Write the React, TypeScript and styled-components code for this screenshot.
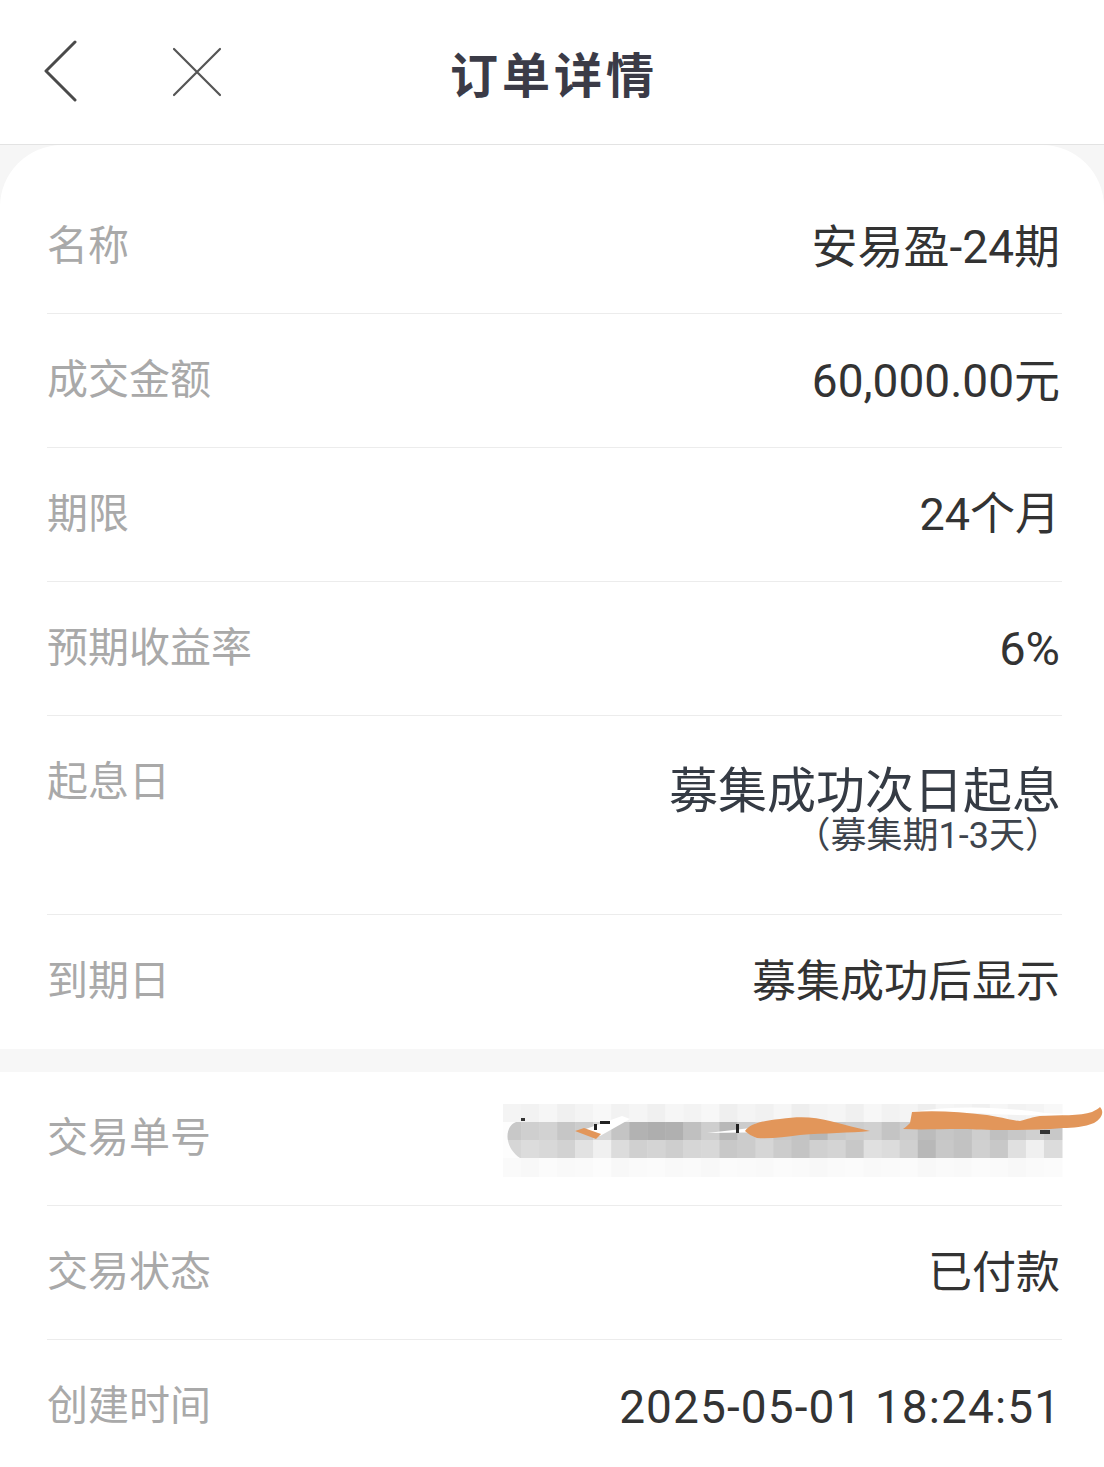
import React from "react";
import styled, { createGlobalStyle } from "styled-components";

const GlobalStyle = createGlobalStyle`
  html, body {
    margin: 0;
    padding: 0;
    background: #f6f6f6;
  }
  body {
    font-family: Roboto, "Noto Sans CJK SC", "Noto Sans", sans-serif;
    -webkit-font-smoothing: antialiased;
  }
  * { box-sizing: border-box; }
`;

const Page = styled.div`
  width: 1104px;
  min-height: 1467px;
  background: #f6f6f6;
  overflow: hidden;
`;

const Header = styled.header`
  height: 145px;
  background: #fff;
  border-bottom: 1px solid #e3e3e3;
  display: grid;
  grid-template-columns: 1fr auto 1fr;
  align-items: center;
`;

const NavIcons = styled.div`
  display: flex;
  align-items: center;
  padding-left: 42px;
  gap: 94px;
`;

const IconButton = styled.button`
  display: flex;
  align-items: center;
  justify-content: center;
  padding: 0;
  margin: 0;
  border: none;
  background: transparent;
  cursor: pointer;
`;

const Title = styled.h1`
  margin: 0;
  font-family: "Noto Sans CJK SC", sans-serif;
  font-size: 48px;
  font-weight: 700;
  letter-spacing: 4px;
  padding-left: 4px;
  color: #3b3b47;
  line-height: 1;
`;

const Card = styled.section`
  background: #fff;
  border-radius: 62px 62px 0 0;
  padding-top: 35px;
`;

const Section = styled.section`
  background: #fff;
`;

const Gap = styled.div`
  height: 23px;
  background: #f7f7f7;
`;

const Row = styled.div<{ $tall?: boolean; $last?: boolean }>`
  position: relative;
  display: flex;
  justify-content: space-between;
  align-items: ${(p) => (p.$tall ? "flex-start" : "center")};
  height: ${(p) => (p.$tall ? 199 : 134)}px;
  margin: 0 42px 0 47px;
  border-bottom: 1px solid ${(p) => (p.$last ? "transparent" : "#ececec")};
`;

const Label = styled.div`
  font-size: 41px;
  line-height: 133px;
  color: #a9a9a9;
  white-space: nowrap;
`;

const Value = styled.div<{ $size?: number; $spacing?: number }>`
  font-size: ${(p) => p.$size ?? 46}px;
  letter-spacing: ${(p) => p.$spacing ?? 0}px;
  line-height: 1;
  color: #333;
  white-space: nowrap;
  margin-right: ${(p) => 2 - (p.$spacing ?? 0)}px;
`;

const ValueStack = styled.div`
  display: flex;
  flex-direction: column;
  align-items: flex-end;
  padding-top: 50px;
  margin-right: 1px;
`;

const MainValue = styled.div`
  font-size: 49px;
  line-height: 52px;
  color: #353b44;
  white-space: nowrap;
`;

const SubValue = styled.div`
  font-size: 36px;
  line-height: 36px;
  color: #3e444c;
  white-space: nowrap;
`;

const RedactedArt = styled.svg`
  position: absolute;
  right: -42px;
  top: 0;
  width: 614px;
  height: 134px;
`;

const row1 = [0xf4,0xf2,0xf6,0xf0,0xf4,0xf8,0xf2,0xf5,0xf0,0xf6,0xf3,0xf7,0xef,0xf4,0xf1,0xf6,0xee,0xf3,0xf5,0xf0,0xf7,0xf2,0xf4,0xee,0xf5,0xf3,0xf0,0xf6,0xf2,0xf4,0xf8];
const row2 = [0xc8,0xcf,0xd2,0xc6,0xcc,0xd8,0xc4,0xb2,0xae,0xb0,0xc0,0xce,0xb8,0xcc,0xd4,0xc8,0xc2,0xb6,0xc8,0xcc,0xd0,0xc4,0xcc,0xbc,0xc6,0xc2,0xce,0xc0,0xc8,0xd0,0xc8];
const row3 = [0xd6,0xdc,0xd8,0xd2,0xe2,0xf0,0xdc,0xd0,0xd4,0xce,0xd6,0xd8,0xc8,0xcc,0xd6,0xcc,0xc4,0xd0,0xd4,0xc8,0xe0,0xdc,0xd0,0xb8,0xc8,0xc2,0xd0,0xc8,0xe0,0xf0,0xdc];
const row4 = [0xfa,0xf8,0xfb,0xf9,0xfa,0xfc,0xf8,0xfa,0xfb,0xf9,0xfa,0xf8,0xfb,0xfa,0xf9,0xfb,0xfa,0xf8,0xfa,0xfb,0xf9,0xfa,0xfb,0xf8,0xfa,0xf9,0xfb,0xfa,0xf8,0xfa,0xfb];
const mosaicRows = [
  { y: 1104, h: 18, shades: row1 },
  { y: 1122, h: 18, shades: row2 },
  { y: 1140, h: 18, shades: row3 },
  { y: 1158, h: 19, shades: row4 },
];
const gray = (v: number) => {
  const h = v.toString(16).padStart(2, "0");
  return `#${h}${h}${h}`;
};

function Redaction() {
  const colW = 559 / 31;
  return (
    <RedactedArt viewBox="490 1072 614 134" aria-hidden="true">
      {mosaicRows.map((r) =>
        r.shades.map((s, i) => (
          <rect
            key={`${r.y}-${i}`}
            x={503 + i * colW}
            y={r.y}
            width={colW + 0.5}
            height={r.h}
            fill={gray(s)}
          />
        ))
      )}
      {/* white brush edges */}
      <path d="M516 1122 C505 1126 503 1146 520 1158 L503 1158 L503 1122 Z" fill="#fdfdfd" />
      <path d="M583 1130 L622 1116 L630 1119 L600 1136 Z" fill="#fff" />
      <path d="M707 1133 L777 1125 L778 1132 Z" fill="#fff" />
      <path d="M912 1112 C960 1104 1010 1108 1045 1113 C1070 1116 1090 1110 1100 1106 L1098 1112 C1070 1116 1030 1116 990 1114 C960 1112 930 1112 912 1114 Z" fill="#fff" />
      {/* small dark fragments */}
      <rect x="521" y="1118" width="4" height="3" fill="#333" />
      <rect x="594" y="1124" width="3" height="6" fill="#222" />
      <rect x="600" y="1121" width="10" height="3" fill="#222" />
      <rect x="736" y="1124" width="3" height="9" fill="#222" />
      <rect x="1040" y="1130" width="10" height="4" fill="#333" />
      {/* orange strokes */}
      <path d="M575 1131 L584 1128 L601 1134 L596 1139 Z" fill="#e2965a" />
      <path d="M745 1131 C750 1124 760 1121 780 1119 C800 1116 815 1117 830 1121 C845 1125 858 1128 870 1131 C850 1133 825 1133 800 1135 C785 1137 770 1139 757 1138 C752 1136 748 1134 745 1131 Z" fill="#e2965a" />
      <path d="M910 1123 L912 1112 C935 1110 960 1112 987 1115 C1005 1118 1015 1121 1020 1121 C1028 1119 1032 1117 1040 1116 C1060 1115 1080 1116 1092 1112 C1096 1110 1099 1108 1100 1107 C1104 1111 1103 1118 1094 1123 C1085 1127 1072 1128 1063 1128 C1040 1130 1020 1130 1000 1130 C980 1130 970 1129 960 1129 C940 1129 920 1130 903 1129 C906 1127 908 1125 910 1123 Z" fill="#e2965a" />
    </RedactedArt>
  );
}

type Item = {
  label: string;
  value?: string;
  size?: number;
  spacing?: number;
  tall?: boolean;
  last?: boolean;
  redacted?: boolean;
};

const firstSection: Item[] = [
  { label: "名称", value: "安易盈-24期" },
  { label: "成交金额", value: "60,000.00元" },
  { label: "期限", value: "24个月", size: 45 },
  { label: "预期收益率", value: "6%", size: 47 },
  { label: "起息日", tall: true },
  { label: "到期日", value: "募集成功后显示", size: 44, last: true },
];

const secondSection: Item[] = [
  { label: "交易单号", redacted: true },
  { label: "交易状态", value: "已付款", size: 44 },
  { label: "创建时间", value: "2025-05-01 18:24:51", spacing: 1.1, last: true },
];

function DetailRow({ item }: { item: Item }) {
  return (
    <Row $tall={item.tall} $last={item.last}>
      <Label>{item.label}</Label>
      {item.tall ? (
        <ValueStack>
          <MainValue>募集成功次日起息</MainValue>
          <SubValue>（募集期1-3天）</SubValue>
        </ValueStack>
      ) : item.redacted ? (
        <Redaction />
      ) : (
        <Value $size={item.size} $spacing={item.spacing}>
          {item.value}
        </Value>
      )}
    </Row>
  );
}

export default function App() {
  return (
    <Page>
      <GlobalStyle />
      <Header>
        <NavIcons>
          <IconButton aria-label="返回">
            <svg width="36" height="64" viewBox="0 0 36 64">
              <path d="M33 2 L4 31 L33 60" fill="none" stroke="#4a4a4a" strokeWidth="3" strokeLinecap="round" strokeLinejoin="round" />
            </svg>
          </IconButton>
          <IconButton aria-label="关闭">
            <svg width="50" height="50" viewBox="0 0 50 50">
              <path d="M2 2 L48 48 M48 2 L2 48" fill="none" stroke="#555" strokeWidth="2.2" strokeLinecap="round" />
            </svg>
          </IconButton>
        </NavIcons>
        <Title>订单详情</Title>
        <div />
      </Header>
      <Card>
        {firstSection.map((item) => (
          <DetailRow key={item.label} item={item} />
        ))}
      </Card>
      <Gap />
      <Section>
        {secondSection.map((item) => (
          <DetailRow key={item.label} item={item} />
        ))}
      </Section>
    </Page>
  );
}
